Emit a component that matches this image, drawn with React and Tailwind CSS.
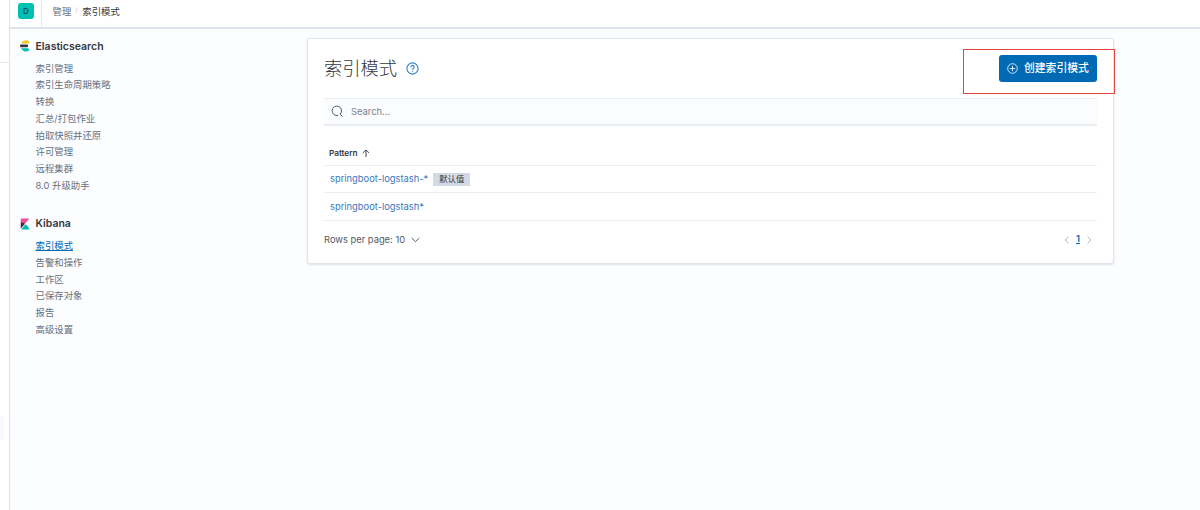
const sections = [
  {
    title: 'Elasticsearch',
    Logo: ElasticLogo,
    items: ['索引管理', '索引生命周期策略', '转换', '汇总/打包作业', '拍取快照并还原', '许可管理', '远程集群', '8.0 升级助手'],
  },
  {
    title: 'Kibana',
    Logo: KibanaLogo,
    items: ['索引模式', '告警和操作', '工作区', '已保存对象', '报告', '高级设置'],
  },
]

const patterns = [
  { name: 'springboot-logstash-*', isDefault: true },
  { name: 'springboot-logstash*', isDefault: false },
]

function ElasticLogo() {
  return (
    <svg className="w-[10px] h-[12px]" viewBox="0 0 10 12">
      <path d="M1 3.6A5 5 0 0 1 9.6 2.2L8.2 3.6z" fill="#fec514" />
      <path d="M.3 4.6h6.5a1.3 1.3 0 0 1 0 2.7H.3a5 5 0 0 1 0-2.7z" fill="#343741" />
      <path d="M1 8.3h7.2l1.4 1.4A5 5 0 0 1 1 8.3z" fill="#00bfb3" />
    </svg>
  )
}

function KibanaLogo() {
  return (
    <svg className="w-[10px] h-[12px]" viewBox="0 0 10 12">
      <path d="M.8.6h8.6L.8 10.6z" fill="#f04e98" />
      <path d="M.8 4.6c1.5 0 2.9.4 4 1.1L.8 10.6z" fill="#343741" />
      <path d="M5.5 6.2c2 1.2 3.4 3 3.8 5.2H1.1z" fill="#00bfb3" />
    </svg>
  )
}

function Header() {
  return (
    <header className="flex h-[27px] bg-white text-[9.4px] leading-none">
      <div className="w-[32px] h-full border-r border-[#e3e7ee] pl-[8px] pt-[3px]">
        <div className="size-[16px] rounded-[3px] bg-[#00bfb3] flex items-center justify-center text-[8px] font-medium text-[#17433f]">
          D
        </div>
      </div>
      <nav className="flex items-center h-[24px] pl-[10.5px]">
        <span className="text-[#69707d]">管理</span>
        <span className="w-px h-[6px] mx-[5px] mb-[4px] bg-[#d3dae6] rotate-[15deg]" />
        <span className="text-[#343741]">索引模式</span>
      </nav>
    </header>
  )
}

function SideNav() {
  return (
    <aside className="w-[297px] shrink-0 pl-[10px] pt-[9px]">
      {sections.map(({ title, Logo, items }) => (
        <div key={title} className="mb-[21px]">
          <h2 className="flex items-center h-[16px] mb-[6.5px] gap-[5.5px] text-[10.5px] font-semibold text-[#343741]">
            <Logo />
            <span className="pt-[1.5px]">{title}</span>
          </h2>
          <ul className="pl-[15.5px] text-[9.4px] leading-[16.75px] text-[#69707d]">
            {items.map((item) => (
              <li key={item}>
                <a className={item === '索引模式' ? 'text-[#006bb4] underline' : ''}>{item}</a>
              </li>
            ))}
          </ul>
        </div>
      ))}
    </aside>
  )
}

function Panel() {
  return (
    <section className="w-[807px] h-[226px] mt-[9px] px-[16px] bg-white border border-[#e1e6ec] rounded-[3px] shadow-[0_1px_2px_rgba(152,162,179,0.3)]">
      <div className="flex items-center h-[59px]">
        <h1 className="text-[18.3px] font-light text-[#343741]">索引模式</h1>
        <svg className="size-[13px] ml-[9px]" viewBox="0 0 13 13" fill="none" stroke="#2f7fc4">
          <circle cx="6.5" cy="6.5" r="5.6" strokeWidth="1.1" />
          <path d="M4.8 5.2a1.7 1.7 0 1 1 2.5 1.4c-.6.3-.8.6-.8 1.2" strokeWidth="1.1" />
          <circle cx="6.5" cy="9.4" r=".4" fill="#2f7fc4" strokeWidth=".5" />
        </svg>
        {/* highlighted call to action */}
        <div className="ml-auto relative">
          <button className="flex items-center w-[98px] h-[27px] pl-[8px] gap-[6px] rounded-[3px] bg-[#006bb4] text-[10.8px] font-medium text-white whitespace-nowrap">
            <svg className="size-[11px] shrink-0" viewBox="0 0 11 11" fill="none" stroke="currentColor" strokeWidth=".8">
              <circle cx="5.5" cy="5.5" r="4.8" />
              <path d="M5.5 2.8v5.4M2.8 5.5h5.4" />
            </svg>
            <span className="leading-none pt-px">创建索引模式</span>
          </button>
          <div className="absolute -left-[36px] -top-[6px] w-[152px] h-[45px] border border-[#e5443b]" />
        </div>
      </div>

      <div className="flex items-center h-[28px] pl-[7px] gap-[7px] bg-[#fbfcfd] border-t border-b-2 border-[#e9edf2] text-[9.4px] text-[#7b828e]">
        <svg className="size-[13px]" viewBox="0 0 13 13" fill="none" stroke="#535966" strokeWidth="1">
          <path d="M7.2 10.3A4.7 4.7 0 1 1 9.2 9.1M9 8.9l2.6 2.7" />
        </svg>
        <span className="pt-[1.5px]">Search...</span>
      </div>

      <div className="flex items-end h-[39.5px] pb-[5px] pl-[5px] gap-[4px] border-b border-[#eaedf2] text-[8.2px] leading-[13px] font-semibold text-[#343741]">
        Pattern
        <svg className="w-[8px] h-[13px]" viewBox="0 0 8 13" fill="none" stroke="currentColor" strokeWidth=".9">
          <path d="M4 10V3M.8 6L4 2.9 7.2 6" />
        </svg>
      </div>
      {patterns.map(({ name, isDefault }) => (
        <div key={name} className="flex items-center h-[27.5px] pl-[6px] gap-[5px] border-b border-[#eaedf2] text-[9.36px] text-[#3c76bb]">
          <span className="pt-px">{name}</span>
          {isDefault && (
            <span className="w-[37px] h-[13px] mt-[2px] bg-[#d3dae6] text-center text-[8.4px] leading-[13px] text-[#343741]">
              默认值
            </span>
          )}
        </div>
      ))}

      <div className="flex items-center h-[38px] text-[9.36px] text-[#535966]">
        <span className="pt-px">Rows per page: 10</span>
        <svg className="w-[9px] h-[6px] ml-[6px]" viewBox="0 0 9 6" fill="none" stroke="currentColor">
          <path d="M.7 1l3.8 3.7L8.3 1" />
        </svg>
        <div className="flex items-center ml-auto mr-[5px] gap-[6px]">
          <svg className="w-[5px] h-[8px]" viewBox="0 0 5 8" fill="none" stroke="#b5bac3">
            <path d="M4.5.6L1 4l3.5 3.4" />
          </svg>
          <span className="w-[6px] text-center font-semibold text-[#006bb4] underline">1</span>
          <svg className="w-[5px] h-[8px]" viewBox="0 0 5 8" fill="none" stroke="#b5bac3">
            <path d="M.5.6L4 4 .5 7.4" />
          </svg>
        </div>
      </div>
    </section>
  )
}

export default function App() {
  return (
    <div className="flex w-[1200px] h-[510px] overflow-hidden bg-white font-['Inter','Noto_Sans_CJK_SC',sans-serif]">
      <div className="w-[10px] shrink-0 border-r border-[#dfe2e8]">
        <div className="h-[63px] border-b border-[#e6eaf0]" />
        <div className="w-[4px] h-[24px] mt-[353px] bg-[#f7f9fc]" />
      </div>
      <div className="flex-1">
        <Header />
        <div className="flex h-[483px] bg-[#fbfdff] border-t-2 border-[#e0e3e9]">
          <SideNav />
          <Panel />
        </div>
      </div>
    </div>
  )
}
